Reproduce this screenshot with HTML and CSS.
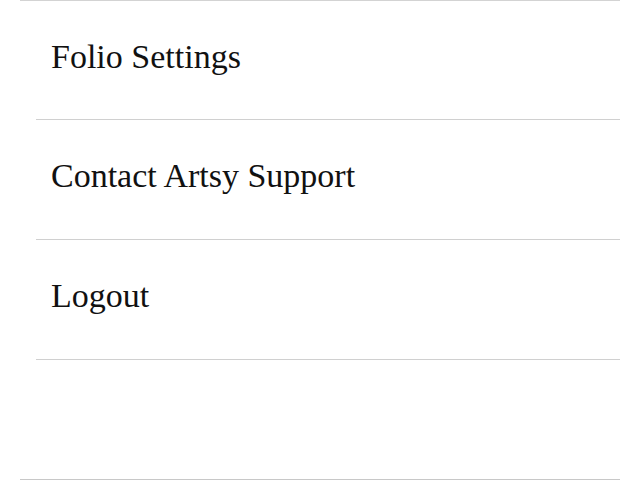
FILE: index.html
```html
<!DOCTYPE html>
<html>
<head>
<meta charset="utf-8">
<link rel="stylesheet" href="styles.css">
</head>
<body>
<div class="menu">
  <ul class="list">
    <li class="item"><div class="cell">Folio Settings</div></li>
    <li class="item"><div class="cell">Contact Artsy Support</div></li>
    <li class="item"><div class="cell">Logout</div></li>
  </ul>
</div>
</body>
</html>
```
FILE: styles.css
```css
html, body {
  margin: 0;
  padding: 0;
  background: #fff;
}
.menu {
  margin: 0 20px;
  height: 480px;
  box-sizing: border-box;
  border-top: 1px solid #d3d3d3;
  border-bottom: 1px solid #c8c8c8;
}
.list {
  list-style: none;
  margin: 0;
  padding: 0;
}
.item {
  padding-left: 16px;
}
.cell {
  height: 112px;
  padding-bottom: 7px;
  border-bottom: 1px solid #d0d0d0;
  padding-left: 15px;
  display: flex;
  align-items: center;
  font-family: "Liberation Serif", "DejaVu Serif", serif;
  font-size: 34px;
  color: #111;
}
.item:first-child .cell {
  height: 111px;
}
```
